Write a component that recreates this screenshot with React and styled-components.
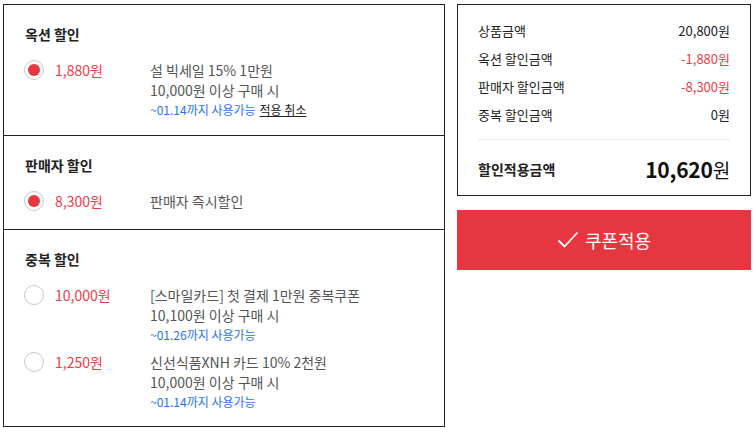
import React from "react";
import styled, { createGlobalStyle } from "styled-components";

const Global = createGlobalStyle`
  html, body { margin: 0; padding: 0; background: #fff; }
  body { font-family: "Noto Sans CJK KR", "Noto Sans", sans-serif; color: #222; }
  * { box-sizing: border-box; }
`;

const Page = styled.div`
  display: flex;
  align-items: flex-start;
  gap: 12px;
  padding: 4px 4px 0 3px;
  width: 755px;
`;

const LeftPanel = styled.div`
  width: 442px;
  border: 1px solid #222;
  display: flex;
  flex-direction: column;
`;

const Section = styled.section`
  padding: 19px 20px ${(p) => p.$pb}px 21px;
  & + & { border-top: 1px solid #222; }
`;

const SectionTitle = styled.h3`
  margin: 0 0 16px;
  font-size: 14px;
  line-height: 20px;
  font-weight: 700;
  color: #222;
`;

const ItemList = styled.div`
  display: flex;
  flex-direction: column;
  gap: 7px;
`;

const Item = styled.div`
  display: grid;
  grid-template-columns: 30px 95px 1fr;
  align-items: start;
`;

const Radio = styled.span`
  width: 20px;
  height: 20px;
  margin-left: -1px;
  border-radius: 50%;
  border: 1px solid #c8c8c8;
  background: #fff;
  display: flex;
  align-items: center;
  justify-content: center;
  &::after {
    content: "";
    width: 12px;
    height: 12px;
    border-radius: 50%;
    background: ${(p) => (p.$checked ? "#e8363f" : "transparent")};
  }
`;

const Price = styled.span`
  font-size: 14px;
  line-height: 20px;
  color: #ef3b48;
`;

const Desc = styled.div`
  display: flex;
  flex-direction: column;
`;

const DescLine = styled.span`
  font-size: 14px;
  line-height: 20px;
  color: #555;
`;

const Expire = styled.span`
  font-size: 12px;
  line-height: 20px;
  color: #1f74f2;
`;

const CancelLink = styled.a`
  color: #222;
  text-decoration: underline;
  margin-left: 4px;
  cursor: pointer;
`;

const RightCol = styled.div`
  width: 294px;
  display: flex;
  flex-direction: column;
  gap: 14px;
`;

const Summary = styled.div`
  border: 1px solid #222;
  padding: 11px 20px 11px 20px;
`;

const SumRow = styled.div`
  display: flex;
  justify-content: space-between;
  align-items: center;
  height: 28px;
  font-size: 13px;
  color: #222;
`;

const SumValue = styled.span`
  color: ${(p) => (p.$red ? "#ef3b48" : "#222")};
`;

const Divider = styled.hr`
  margin: 11px 0 0;
  border: 0;
  border-top: 1px solid #eaeaea;
`;

const TotalRow = styled.div`
  display: flex;
  justify-content: space-between;
  align-items: center;
  height: 30px;
  margin-top: 14px;
`;

const TotalLabel = styled.span`
  font-size: 14px;
  font-weight: 700;
  color: #222;
`;

const TotalValue = styled.span`
  font-size: 21px;
  font-weight: 700;
  color: #111;
  letter-spacing: -0.2px;
`;

const Won = styled.span`
  font-size: 19px;
  font-weight: 400;
`;

const ApplyButton = styled.button`
  height: 60px;
  width: 100%;
  border: 0;
  background: #e6363f;
  color: #fff;
  font-family: inherit;
  font-size: 18px;
  display: flex;
  align-items: center;
  justify-content: center;
  gap: 6px;
  cursor: pointer;
  padding: 0;
`;

const sections = [
  {
    title: "옥션 할인",
    pb: 15,
    items: [
      {
        price: "1,880원",
        checked: true,
        lines: ["설 빅세일 15% 1만원", "10,000원 이상 구매 시"],
        expire: "~01.14까지 사용가능",
        cancel: true,
      },
    ],
  },
  {
    title: "판매자 할인",
    pb: 18,
    items: [{ price: "8,300원", checked: true, lines: ["판매자 즉시할인"] }],
  },
  {
    title: "중복 할인",
    pb: 14,
    items: [
      {
        price: "10,000원",
        lines: ["[스마일카드] 첫 결제 1만원 중복쿠폰", "10,100원 이상 구매 시"],
        expire: "~01.26까지 사용가능",
      },
      {
        price: "1,250원",
        lines: ["신선식품XNH 카드 10% 2천원", "10,000원 이상 구매 시"],
        expire: "~01.14까지 사용가능",
      },
    ],
  },
];

const summary = [
  { label: "상품금액", value: "20,800원" },
  { label: "옥션 할인금액", value: "-1,880원", red: true },
  { label: "판매자 할인금액", value: "-8,300원", red: true },
  { label: "중복 할인금액", value: "0원" },
];

export default function App() {
  return (
    <>
      <Global />
      <Page>
        <LeftPanel>
          {sections.map((s) => (
            <Section key={s.title} $pb={s.pb}>
              <SectionTitle>{s.title}</SectionTitle>
              <ItemList>
                {s.items.map((it, i) => (
                  <Item key={i}>
                    <Radio $checked={it.checked} />
                    <Price>{it.price}</Price>
                    <Desc>
                      {it.lines.map((l) => (
                        <DescLine key={l}>{l}</DescLine>
                      ))}
                      {it.expire && (
                        <Expire>
                          {it.expire}
                          {it.cancel && <CancelLink>적용 취소</CancelLink>}
                        </Expire>
                      )}
                    </Desc>
                  </Item>
                ))}
              </ItemList>
            </Section>
          ))}
        </LeftPanel>
        <RightCol>
          <Summary>
            {summary.map((r) => (
              <SumRow key={r.label}>
                <span>{r.label}</span>
                <SumValue $red={r.red}>{r.value}</SumValue>
              </SumRow>
            ))}
            <Divider />
            <TotalRow>
              <TotalLabel>할인적용금액</TotalLabel>
              <TotalValue>
                10,620<Won>원</Won>
              </TotalValue>
            </TotalRow>
          </Summary>
          <ApplyButton>
            <svg width="22" height="18" viewBox="0 0 22 18" fill="none">
              <path d="M1.5 9.5 L7.5 15.5 L20.5 1.5" stroke="#fff" strokeWidth="1.8" />
            </svg>
            쿠폰적용
          </ApplyButton>
        </RightCol>
      </Page>
    </>
  );
}
